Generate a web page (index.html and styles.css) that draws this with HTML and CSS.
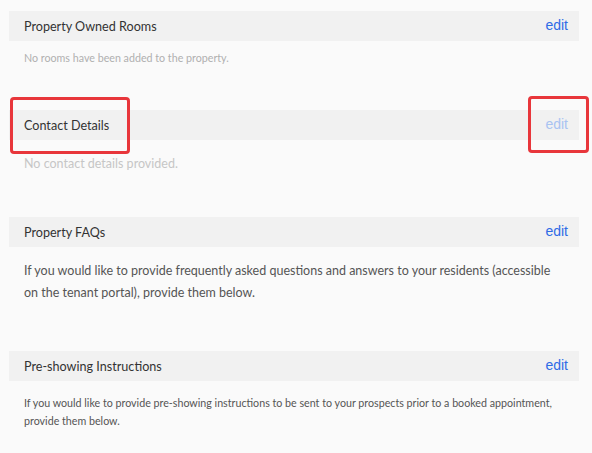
FILE: index.html
```html
<!DOCTYPE html>
<html>
<head>
<meta charset="utf-8">
<link rel="stylesheet" href="styles.css">
</head>
<body>
<div class="page">
  <section class="section s-rooms">
    <div class="head"><span class="title">Property Owned Rooms</span><a class="edit">edit</a></div>
    <div class="body"><p class="empty-sm">No rooms have been added to the property.</p></div>
  </section>
  <section class="section s-contact">
    <div class="head"><span class="title">Contact Details</span><a class="edit disabled">edit</a></div>
    <div class="body"><p class="empty-md">No contact details provided.</p></div>
  </section>
  <section class="section s-faq">
    <div class="head"><span class="title">Property FAQs</span><a class="edit">edit</a></div>
    <div class="body"><p class="text-md">If you would like to provide frequently asked questions and answers to your residents (accessible on the tenant portal), provide them below.</p></div>
  </section>
  <section class="section s-pre">
    <div class="head"><span class="title">Pre-showing Instructions</span><a class="edit">edit</a></div>
    <div class="body"><p class="text-sm">If you would like to provide pre-showing instructions to be sent to your prospects prior to a booked appointment, provide them below.</p></div>
  </section>
  <div class="mark mark-title"></div>
  <div class="mark mark-edit"></div>
</div>
</body>
</html>
```
FILE: styles.css
```css
html, body {
  margin: 0;
  padding: 0;
  background: #fafafa;
}
body {
  font-family: Lato, "Noto Sans", sans-serif;
  color: #333;
}
.page {
  position: relative;
  padding: 11px 13px 0 9px;
  height: 442px;
  overflow: hidden;
}
.head {
  height: 30px;
  background: #f1f1f1;
  display: flex;
  align-items: center;
  justify-content: space-between;
  padding: 0 11px 0 15px;
}
.title {
  font-size: 12.6px;
  color: #333;
}
.edit {
  font-family: "Liberation Sans", Arial, sans-serif;
  font-size: 14px;
  color: #2f6be6;
  cursor: pointer;
  margin-top: -3px;
}
.edit.disabled {
  color: #a9c3f2;
}
.body {
  padding: 0 15px;
}
.body p {
  margin: 0;
}
.s-rooms .body { padding-top: 10px; height: 59px; }
.s-contact .body { padding-top: 16px; height: 61px; }
.s-faq .body { padding-top: 13px; height: 91px; }
.s-pre .body { padding-top: 13px; }
.empty-sm {
  font-size: 10.7px;
  line-height: 14px;
  color: #b0b0b0;
}
.empty-md {
  font-size: 12.5px;
  line-height: 16px;
  color: #c6c6c6;
}
.text-md {
  font-size: 12.5px;
  line-height: 22px;
  color: #555;
}
.text-sm {
  font-size: 10.7px;
  line-height: 18px;
  color: #555;
}
.mark {
  position: absolute;
  border: 3px solid #e8363b;
  border-radius: 4px;
  box-sizing: border-box;
}
.mark-title { left: 10px; top: 97px; width: 120px; height: 57px; }
.mark-edit { left: 528px; top: 96px; width: 61px; height: 57px; }
```
